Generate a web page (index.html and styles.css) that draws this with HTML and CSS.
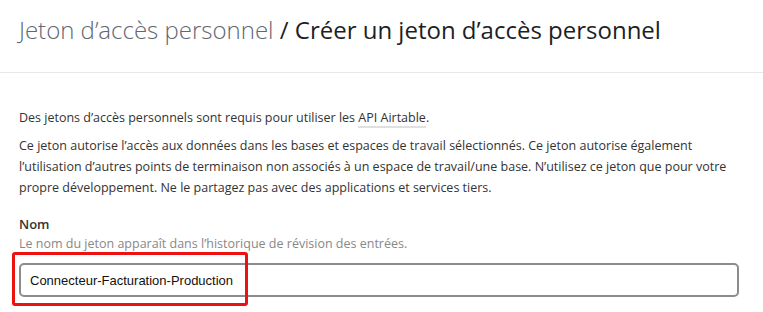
FILE: index.html
```html
<!DOCTYPE html>
<html>
<head>
    <title>Créer un jeton d'accès personnel</title>
    <link rel="stylesheet" href="styles.css">
</head>
<body>
    <header class="page-header">
        <h1><span class="crumb">Jeton d’accès personnel</span> / Créer un jeton d’accès personnel</h1>
    </header>
    <div class="content">
        <p>Des jetons d’accès personnels sont requis pour utiliser les <a href="#">API Airtable</a>.</p>
        <p>Ce jeton autorise l’accès aux données dans les bases et espaces de travail sélectionnés. Ce jeton autorise également l’utilisation d’autres points de terminaison non associés à un espace de travail/une base. N’utilisez ce jeton que pour votre propre développement. Ne le partagez pas avec des applications et services tiers.</p>

        <div class="form-group">
            <label for="tokenName">Nom</label>
            <small>Le nom du jeton apparaît dans l’historique de révision des entrées.</small>
            <div class="field">
                <input type="text" id="tokenName" value="Connecteur-Facturation-Production">
                <span class="highlight"></span>
            </div>
        </div>
    </div>
</body>
</html>
```

FILE: styles.css
```css
body {
    font-family: "Open Sans", sans-serif;
    margin: 0;
    background-color: white;
    color: #333;
}
.page-header {
    padding: 14px 19px 0;
    height: 58px;
    border-bottom: 1px solid #e8e8e8;
}
h1 {
    margin: 0;
    font-size: 24px;
    font-weight: 400;
    line-height: 32px;
    color: #1d1f25;
}
.crumb {
    color: #616670;
    font-weight: 300;
}
.content {
    padding: 34px 19px 14px;
    max-width: 720px;
}
p {
    margin: 0 0 7px;
    font-size: 12.5px;
    line-height: 21px;
    color: #333;
}
a {
    color: #333;
    text-decoration: none;
    border-bottom: 2px solid #e0e0e0;
}
.form-group {
    margin-top: 16px;
}
label {
    display: block;
    font-size: 13px;
    font-weight: 600;
    line-height: 20px;
    color: #333;
}
small {
    display: block;
    font-size: 12.5px;
    line-height: 20px;
    color: #888;
}
.field {
    position: relative;
    margin-top: 9px;
}
input[type="text"] {
    display: block;
    width: 100%;
    height: 34px;
    padding: 0 9px;
    border: 2px solid #8c8c8c;
    border-radius: 5px;
    font-family: "Liberation Sans", Arial, sans-serif;
    font-size: 13px;
    color: #111;
    box-sizing: border-box;
}
.highlight {
    position: absolute;
    left: -7px;
    top: -11px;
    width: 236px;
    height: 54px;
    border: 3px solid #ee1111;
    border-radius: 3px;
    box-sizing: border-box;
}
```
